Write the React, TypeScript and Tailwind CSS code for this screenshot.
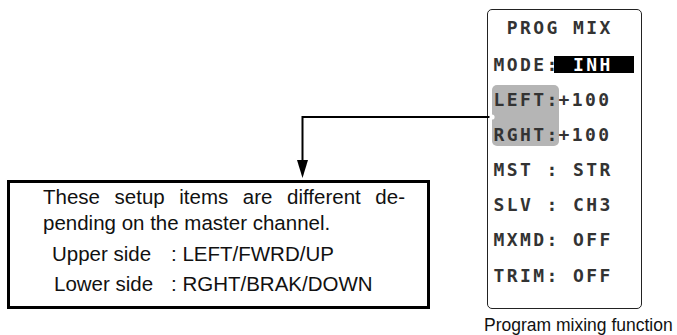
import React from 'react'

const lcdFont = { fontFamily: '"DejaVu Sans Mono", "Liberation Mono", monospace' }
const sans = { fontFamily: '"Liberation Sans", Arial, sans-serif' }

function LcdRow({ text, className = '' }: { text: string; className?: string }) {
  return <div className={`h-[35px] leading-[35px] whitespace-pre ${className}`}>{text}</div>
}

function Connector() {
  return (
    <svg className="absolute inset-0 pointer-events-none" width={677} height={335}>
      <path d="M492 117 H302.5 V162" fill="none" stroke="#000" strokeWidth={2} />
      <polygon points="297,160 308,160 302.5,178" fill="#000" />
      <circle cx={492} cy={117} r={2.6} fill="#fff" />
    </svg>
  )
}

export default function App() {
  return (
    <div className="relative w-[677px] h-[335px] bg-white overflow-hidden flex">
      {/* note box */}
      <div className="w-[480px] pl-[7px] pt-[180px]">
        <div
          className="w-[423px] h-[129px] border-[3px] border-black pl-[33px] pt-[1px] text-[20.5px] text-[#111]"
          style={sans}
        >
          <div className="w-[362px] leading-[26px] text-justify [text-align-last:justify]">
            These setup items are different de-
          </div>
          <div className="leading-[26px]">pending on the master channel.</div>
          <div className="flex leading-[30px] mt-[3px] pl-[9px]">
            <span className="w-[119px]">Upper side</span>
            <span>: LEFT/FWRD/UP</span>
          </div>
          <div className="flex leading-[30px] pl-[11px]">
            <span className="w-[117px]">Lower side</span>
            <span>: RGHT/BRAK/DOWN</span>
          </div>
        </div>
      </div>

      {/* LCD screen */}
      <div className="w-[197px] pl-[7px] pt-[9px] flex flex-col">
        <div
          className="w-[155px] h-[301px] border-[1.5px] border-[#222] rounded-[5px] pl-[5.5px] text-[18px] font-bold tracking-[2.4px] text-[#333]"
          style={lcdFont}
        >
          <LcdRow text=" PROG MIX" className="h-[37px]" />
          <div className="h-[35px] leading-[35px] whitespace-pre flex items-center">
            <span>MODE:</span>
            <span className="-ml-[6px] pl-[6px] w-[80px] h-[17px] leading-[17px] bg-black text-white">
              {' INH'}
            </span>
          </div>
          <div className="flex mt-[2.5px] h-[61px]">
            <div className="-ml-[2px] pl-[2px] w-[67px] h-[61px] bg-[#b5b5b5] rounded-[5px] flex flex-col gap-[5px]">
              <div className="h-[30px] leading-[30px]">LEFT:</div>
              <div className="h-[30px] leading-[30px]">RGHT:</div>
            </div>
            <div className="flex flex-col gap-[5px]">
              <div className="h-[30px] leading-[30px]">+100</div>
              <div className="h-[30px] leading-[30px]">+100</div>
            </div>
          </div>
          <LcdRow text="MST : STR" className="mt-[6px]" />
          <LcdRow text="SLV : CH3" />
          <LcdRow text="MXMD: OFF" className="h-[36px]" />
          <LcdRow text="TRIM: OFF" />
        </div>
        <div className="-ml-[3px] mt-[6px] text-[17.5px] leading-[20px] whitespace-nowrap text-[#111]" style={sans}>
          Program mixing function
        </div>
      </div>

      <Connector />
    </div>
  )
}
